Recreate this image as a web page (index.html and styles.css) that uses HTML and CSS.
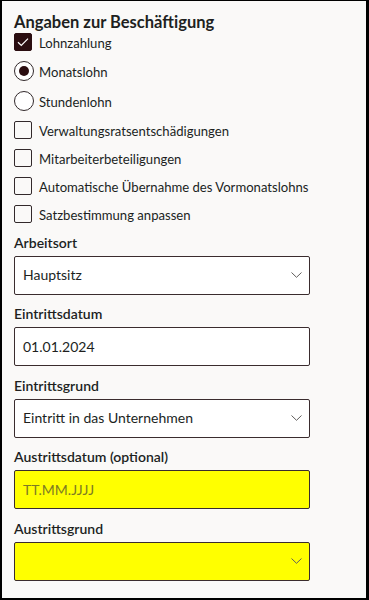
FILE: index.html
```html
<!DOCTYPE html>
<html lang="de">
<head>
  <meta charset="UTF-8" />
  <meta name="viewport" content="width=device-width, initial-scale=1.0"/>
  <title>Beschäftigung</title>
  <link rel="stylesheet" href="styles.css">
</head>
<body>
  <div class="frame">
    <h2>Angaben zur Beschäftigung</h2>

    <div class="options">
      <div class="check-row">
        <span class="box checked">
          <svg width="12" height="10" viewBox="0 0 12 10"><path d="M1 5.2 L4.3 8.4 L11 1.6" fill="none" stroke="#fff" stroke-width="1.2"/></svg>
        </span>
        <span class="opt-text">Lohnzahlung</span>
      </div>

      <div class="radio-group">
        <div class="radio-row">
          <span class="circle selected"><span class="dot"></span></span>
          <span class="opt-text">Monatslohn</span>
        </div>
        <div class="radio-row">
          <span class="circle"></span>
          <span class="opt-text">Stundenlohn</span>
        </div>
      </div>

      <div class="check-row">
        <span class="box"></span>
        <span class="opt-text">Verwaltungsratsentschädigungen</span>
      </div>
      <div class="check-row">
        <span class="box"></span>
        <span class="opt-text">Mitarbeiterbeteiligungen</span>
      </div>
      <div class="check-row">
        <span class="box"></span>
        <span class="opt-text">Automatische Übernahme des Vormonatslohns</span>
      </div>
      <div class="check-row last">
        <span class="box"></span>
        <span class="opt-text">Satzbestimmung anpassen</span>
      </div>
    </div>

    <div class="field">
      <label>Arbeitsort</label>
      <div class="control">
        <span class="value">Hauptsitz</span>
        <svg class="chevron" width="11" height="6" viewBox="0 0 11 6"><path d="M0.5 0.5 L5.5 5.3 L10.5 0.5" fill="none" stroke="#605e5c" stroke-width="1"/></svg>
      </div>
    </div>

    <div class="field">
      <label>Eintrittsdatum</label>
      <div class="control">
        <span class="value">01.01.2024</span>
      </div>
    </div>

    <div class="field">
      <label>Eintrittsgrund</label>
      <div class="control">
        <span class="value">Eintritt in das Unternehmen</span>
        <svg class="chevron" width="11" height="6" viewBox="0 0 11 6"><path d="M0.5 0.5 L5.5 5.3 L10.5 0.5" fill="none" stroke="#605e5c" stroke-width="1"/></svg>
      </div>
    </div>

    <div class="field">
      <label>Austrittsdatum (optional)</label>
      <div class="control required">
        <span class="value placeholder">TT.MM.JJJJ</span>
      </div>
    </div>

    <div class="field">
      <label>Austrittsgrund</label>
      <div class="control required">
        <span class="value"></span>
        <svg class="chevron" width="11" height="6" viewBox="0 0 11 6"><path d="M0.5 0.5 L5.5 5.3 L10.5 0.5" fill="none" stroke="#605e5c" stroke-width="1"/></svg>
      </div>
    </div>
  </div>
</body>
</html>
```

FILE: styles.css
```css
body {
  margin: 0;
  font-family: Lato, "Noto Sans", sans-serif;
  color: #201f1e;
}

.frame {
  box-sizing: border-box;
  height: 600px;
  background: #faf9f8;
  border-top: 1px solid #000;
  border-left: 2px solid #000;
  border-right: 3px solid #000;
  border-bottom: 2px solid #000;
  padding-left: 12px;
}

h2 {
  margin: 10px 0 0;
  height: 22px;
  font-size: 16.5px;
  line-height: 22px;
  font-weight: 700;
  color: #201f1e;
}

.options {
  font-size: 13.1px;
}

.check-row,
.radio-row {
  display: flex;
  align-items: center;
  gap: 7px;
  margin-bottom: 10px;
}

.check-row {
  height: 18px;
}

.check-row.last {
  margin-bottom: 0;
}

.radio-row {
  height: 20px;
  gap: 5px;
}

.radio-group {
  margin-bottom: 1px;
}

.box {
  box-sizing: border-box;
  width: 18px;
  height: 18px;
  border: 1px solid #32292b;
  border-radius: 2px;
  display: flex;
  align-items: center;
  justify-content: center;
  flex-shrink: 0;
}

.box.checked {
  background: #2a0d10;
  border-color: #2a0d10;
}

.circle {
  box-sizing: border-box;
  width: 20px;
  height: 20px;
  border: 1px solid #32292b;
  border-radius: 50%;
  background: #fff;
  display: flex;
  align-items: center;
  justify-content: center;
  flex-shrink: 0;
}

.dot {
  width: 10px;
  height: 10px;
  border-radius: 50%;
  background: #2a0d10;
}

.opt-text {
  line-height: 18px;
  padding-top: 2px;
}

.field {
  width: 296px;
}

label {
  display: block;
  padding-top: 9.5px;
  padding-bottom: 3px;
  font-size: 14px;
  line-height: 20px;
  font-weight: 600;
}

.control {
  box-sizing: border-box;
  height: 39px;
  border: 1px solid #3a2c2e;
  border-radius: 2px;
  background: #fff;
  display: flex;
  align-items: center;
  justify-content: space-between;
  padding: 0 7px 0 8px;
}

.control.required {
  background: #ffff00;
}

.value {
  font-size: 14px;
  line-height: 20px;
}

.placeholder {
  color: #7d7b24;
}

.chevron {
  display: block;
}
```
